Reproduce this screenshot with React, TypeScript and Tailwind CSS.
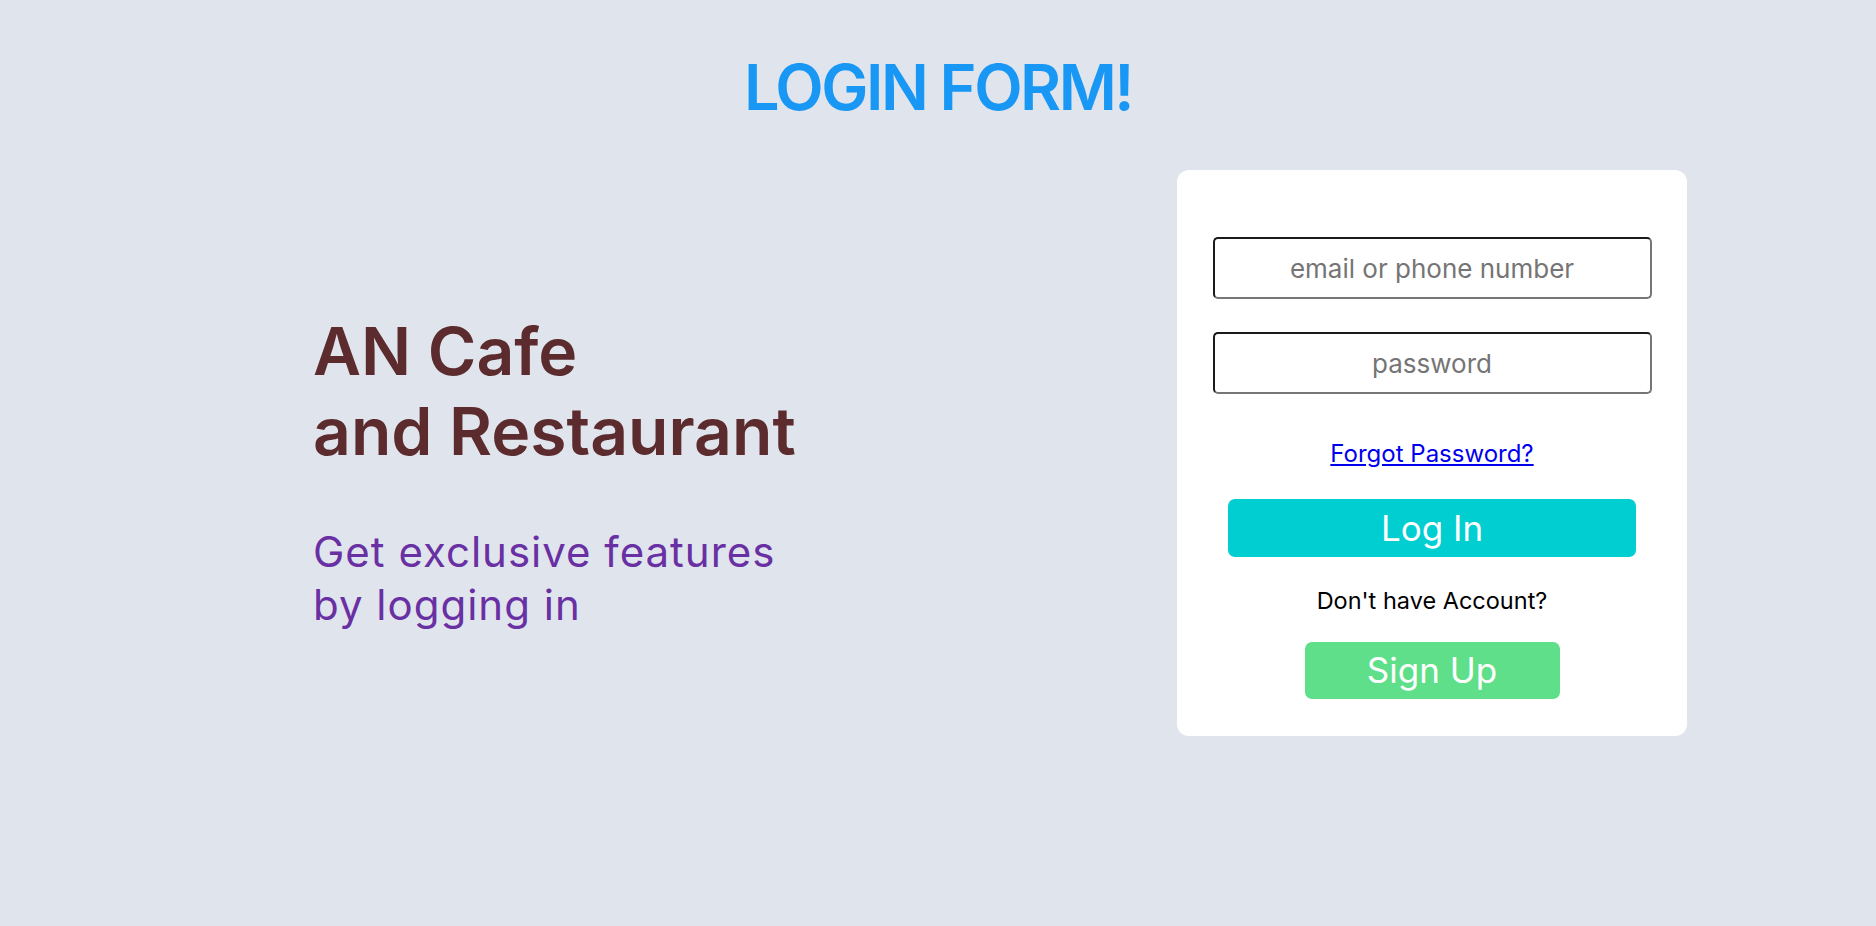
import React from "react";

export default function App() {
  return (
    <div className="min-h-screen w-full bg-[#e0e4ec] font-['Inter','Noto_Sans',sans-serif]">
      <h1 className="pt-[56px] text-center text-[63px] font-semibold leading-[63px] tracking-[-2.5px] text-[#1897f5]">
        LOGIN FORM!
      </h1>
      <div className="mt-[51px] flex items-start pl-[313px]">
        <div className="mt-[141px] w-[864px]">
          <h2 className="text-[66px] font-semibold leading-[80px] text-[#5b2b2e]">
            AN Cafe
            <br />
            and Restaurant
          </h2>
          <p className="mt-[54px] text-[42px] leading-[53px] tracking-[1px] text-[#6930a3]">
            Get exclusive features
            <br />
            by logging in
          </p>
        </div>
        <div className="flex h-[566px] w-[510px] flex-col items-center rounded-xl bg-white pt-[67px]">
          <input
            type="text"
            placeholder="email or phone number"
            className="h-[62px] w-[439px] rounded-[5px] border-2 border-t-[#1a1a1a] border-l-[#1a1a1a] border-r-[#767676] border-b-[#767676] bg-white text-center text-[26px] text-black outline-none placeholder:text-[#757575]"
          />
          <input
            type="password"
            placeholder="password"
            className="mt-[33px] h-[62px] w-[439px] rounded-[5px] border-2 border-t-[#1a1a1a] border-l-[#1a1a1a] border-r-[#767676] border-b-[#767676] bg-white text-center text-[26px] text-black outline-none placeholder:text-[#757575]"
          />
          <a
            href="#"
            className="mt-[48px] text-[24px] leading-[24px] text-[#0000ee] underline"
          >
            Forgot Password?
          </a>
          <button className="mt-[33px] flex h-[58px] w-[408px] items-center justify-center rounded-[7px] bg-[#00ced1] text-[35px] text-white">
            Log In
          </button>
          <p className="mt-[32px] text-[23.5px] leading-[24px] text-black">
            Don't have Account?
          </p>
          <button className="mt-[29px] flex h-[57px] w-[255px] items-center justify-center rounded-[7px] bg-[#5fdf8a] text-[35px] text-white">
            Sign Up
          </button>
        </div>
      </div>
    </div>
  );
}
